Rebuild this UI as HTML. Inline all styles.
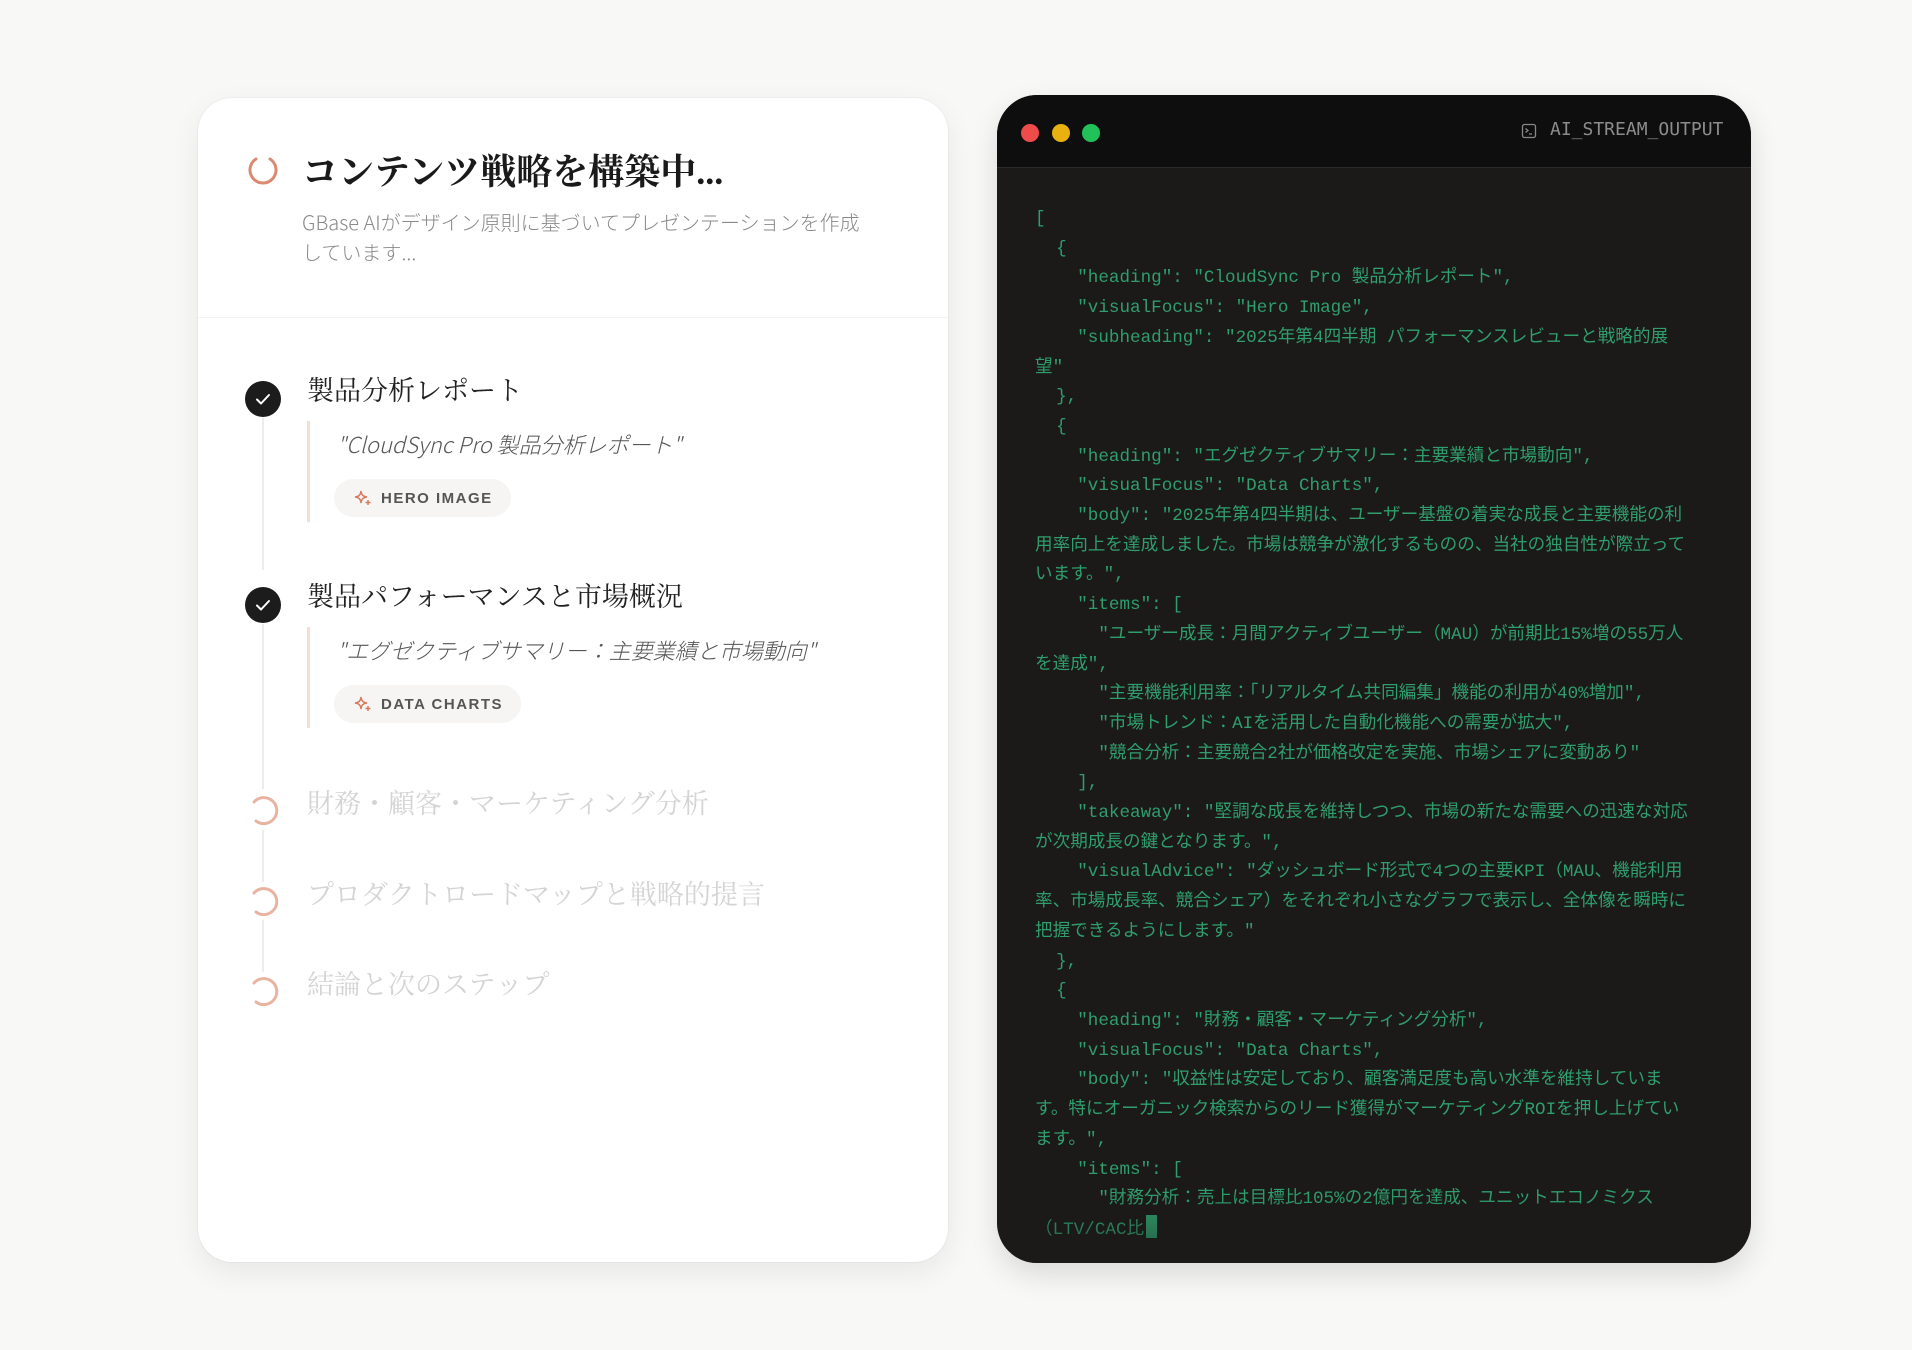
<!DOCTYPE html>
<html><head><meta charset="utf-8"><style>
*{margin:0;padding:0;box-sizing:border-box}
body{width:1912px;height:1350px;background:#f8f8f7;position:relative;overflow:hidden;font-family:"Liberation Sans","Noto Sans CJK JP",sans-serif}
.card{position:absolute;left:198px;top:98px;width:750px;height:1164px;background:#fff;border-radius:34px;box-shadow:0 10px 30px rgba(0,0,0,.07),0 0 0 1px rgba(0,0,0,.03)}
.abs{position:absolute}
.title{left:302px;top:144px;font-family:"Liberation Serif","Noto Serif CJK SC",serif;font-weight:700;font-size:36px;color:#1a1a1a;white-space:nowrap}
.sub{left:302px;top:207px;width:590px;font-size:20px;line-height:30px;color:#8a8a8a;font-family:"Noto Sans CJK JP",sans-serif;font-weight:300}
.div{left:198px;top:317px;width:750px;height:1px;background:#f3f3f3}
.step{left:307px;font-family:"Liberation Serif","Noto Serif CJK SC",serif;font-size:27px;white-space:nowrap;color:#222}
.pend{color:#d4d4d4}
.check{width:36px;height:36px;border-radius:50%;background:#1c1c1c}
.vline{width:2px;background:#ececec;left:262px}
.qbar{left:307px;width:3px;background:#f6dcd3}
.quote{left:337px;font-size:22px;font-style:italic;color:#555;white-space:nowrap;font-family:"Noto Sans CJK JP",sans-serif;font-weight:300}
.pill{left:334px;height:38px;border-radius:19px;background:#f6f5f3;font-size:15px;font-weight:700;letter-spacing:1.5px;color:#555;display:flex;align-items:center;padding:0 18px 0 20px;gap:9px}
.term{position:absolute;left:997px;top:95px;width:754px;height:1168px;background:#1b1a19;border-radius:40px;overflow:hidden;box-shadow:0 12px 30px rgba(0,0,0,.12)}
.thead{position:absolute;left:0;top:0;width:100%;height:73px;background:#0e0e0e;border-bottom:1px solid #2a2a2a}
.dot{position:absolute;top:29px;width:18px;height:18px;border-radius:50%}
.code{position:absolute;left:38px;top:110px;font-family:"Liberation Mono","Noto Sans CJK JP",monospace;font-size:17.6px;line-height:29.7px;color:#2f9d6c;white-space:pre}
.fade{position:absolute;left:0;bottom:0;width:100%;height:70px;background:linear-gradient(rgba(27,26,25,0),rgba(27,26,25,.55))}
.cursor{display:inline-block;width:11px;height:23px;background:#2f9d6c;vertical-align:-4px;margin-left:2px}
</style></head><body>
<div class="card"></div>
<svg class="abs" style="left:246px;top:153px" width="34" height="34" viewBox="0 0 34 34"><path d="M10 6 A13 13 0 1 0 24 6" fill="none" stroke="#d98a70" stroke-width="3" stroke-linecap="round"/></svg>
<div class="abs title">コンテンツ戦略を構築中...</div>
<div class="abs sub">GBase AIがデザイン原則に基づいてプレゼンテーションを作成<br>しています...</div>
<div class="abs div"></div>

<div class="abs vline" style="top:418px;height:152px"></div>
<div class="abs vline" style="top:624px;height:165px"></div>
<div class="abs vline" style="top:830px;height:52px"></div>
<div class="abs vline" style="top:920px;height:52px"></div>

<div class="abs check" style="left:245px;top:381px"><svg width="36" height="36"><path d="M12 18.5l4 4 8-8.5" fill="none" stroke="#fff" stroke-width="2" stroke-linecap="round" stroke-linejoin="round"/></svg></div>
<div class="abs step" style="top:369px">製品分析レポート</div>
<div class="abs qbar" style="top:421px;height:101px"></div>
<div class="abs quote" style="top:428px">"CloudSync Pro 製品分析レポート"</div>
<div class="abs pill" style="top:479px"><svg width="18" height="18" viewBox="0 0 18 18" fill="none" stroke="#d97a5c" stroke-width="1.5"><path d="M7 2 C7.5 6 9 7.5 13 8 C9 8.5 7.5 10 7 14 C6.5 10 5 8.5 1 8 C5 7.5 6.5 6 7 2Z"/><path d="M14 11v5M11.5 13.5h5"/></svg>HERO IMAGE</div>

<div class="abs check" style="left:245px;top:587px"><svg width="36" height="36"><path d="M12 18.5l4 4 8-8.5" fill="none" stroke="#fff" stroke-width="2" stroke-linecap="round" stroke-linejoin="round"/></svg></div>
<div class="abs step" style="top:575px">製品パフォーマンスと市場概況</div>
<div class="abs qbar" style="top:627px;height:101px"></div>
<div class="abs quote" style="top:634px">"エグゼクティブサマリー：主要業績と市場動向"</div>
<div class="abs pill" style="top:685px"><svg width="18" height="18" viewBox="0 0 18 18" fill="none" stroke="#d97a5c" stroke-width="1.5"><path d="M7 2 C7.5 6 9 7.5 13 8 C9 8.5 7.5 10 7 14 C6.5 10 5 8.5 1 8 C5 7.5 6.5 6 7 2Z"/><path d="M14 11v5M11.5 13.5h5"/></svg>DATA CHARTS</div>

<svg class="abs" style="left:246px;top:793px" width="34" height="34" viewBox="0 0 34 34"><path d="M8 9 A13 13 0 1 1 10 28" fill="none" stroke="#e8b4a2" stroke-width="3" stroke-linecap="round"/></svg>
<div class="abs step pend" style="top:782px">財務・顧客・マーケティング分析</div>
<svg class="abs" style="left:246px;top:884px" width="34" height="34" viewBox="0 0 34 34"><path d="M8 9 A13 13 0 1 1 10 28" fill="none" stroke="#e8b4a2" stroke-width="3" stroke-linecap="round"/></svg>
<div class="abs step pend" style="top:873px">プロダクトロードマップと戦略的提言</div>
<svg class="abs" style="left:246px;top:974px" width="34" height="34" viewBox="0 0 34 34"><path d="M8 9 A13 13 0 1 1 10 28" fill="none" stroke="#e8b4a2" stroke-width="3" stroke-linecap="round"/></svg>
<div class="abs step pend" style="top:963px">結論と次のステップ</div>

<div class="term">
<div class="thead">
<div class="dot" style="left:24px;background:#ef4b4b"></div>
<div class="dot" style="left:55px;background:#e8b10f"></div>
<div class="dot" style="left:85px;background:#22c25a"></div>
<svg class="abs" style="left:524px;top:28px" width="16" height="16" viewBox="0 0 16 16" fill="none" stroke="#888" stroke-width="1.3"><rect x="1.5" y="1.5" width="13" height="13" rx="2"/><path d="M4.5 5.5l2.5 2-2.5 2M8 11h3"/></svg>
<div class="abs" style="left:553px;top:24px;font-family:'DejaVu Sans Mono','Liberation Mono',monospace;font-size:18px;color:#8c8c8c;letter-spacing:0">AI_STREAM_OUTPUT</div>
</div>
<div class="code">[
  {
    "heading": "CloudSync Pro 製品分析レポート",
    "visualFocus": "Hero Image",
    "subheading": "2025年第4四半期 パフォーマンスレビューと戦略的展
望"
  },
  {
    "heading": "エグゼクティブサマリー：主要業績と市場動向",
    "visualFocus": "Data Charts",
    "body": "2025年第4四半期は、ユーザー基盤の着実な成長と主要機能の利
用率向上を達成しました。市場は競争が激化するものの、当社の独自性が際立って
います。",
    "items": [
      "ユーザー成長：月間アクティブユーザー（MAU）が前期比15%増の55万人
を達成",
      "主要機能利用率：「リアルタイム共同編集」機能の利用が40%増加",
      "市場トレンド：AIを活用した自動化機能への需要が拡大",
      "競合分析：主要競合2社が価格改定を実施、市場シェアに変動あり"
    ],
    "takeaway": "堅調な成長を維持しつつ、市場の新たな需要への迅速な対応
が次期成長の鍵となります。",
    "visualAdvice": "ダッシュボード形式で4つの主要KPI（MAU、機能利用
率、市場成長率、競合シェア）をそれぞれ小さなグラフで表示し、全体像を瞬時に
把握できるようにします。"
  },
  {
    "heading": "財務・顧客・マーケティング分析",
    "visualFocus": "Data Charts",
    "body": "収益性は安定しており、顧客満足度も高い水準を維持していま
す。特にオーガニック検索からのリード獲得がマーケティングROIを押し上げてい
ます。",
    "items": [
      "財務分析：売上は目標比105%の2億円を達成、ユニットエコノミクス
（LTV/CAC比<span class="cursor"></span></div>
<div class="fade"></div>
</div>
</body></html>
